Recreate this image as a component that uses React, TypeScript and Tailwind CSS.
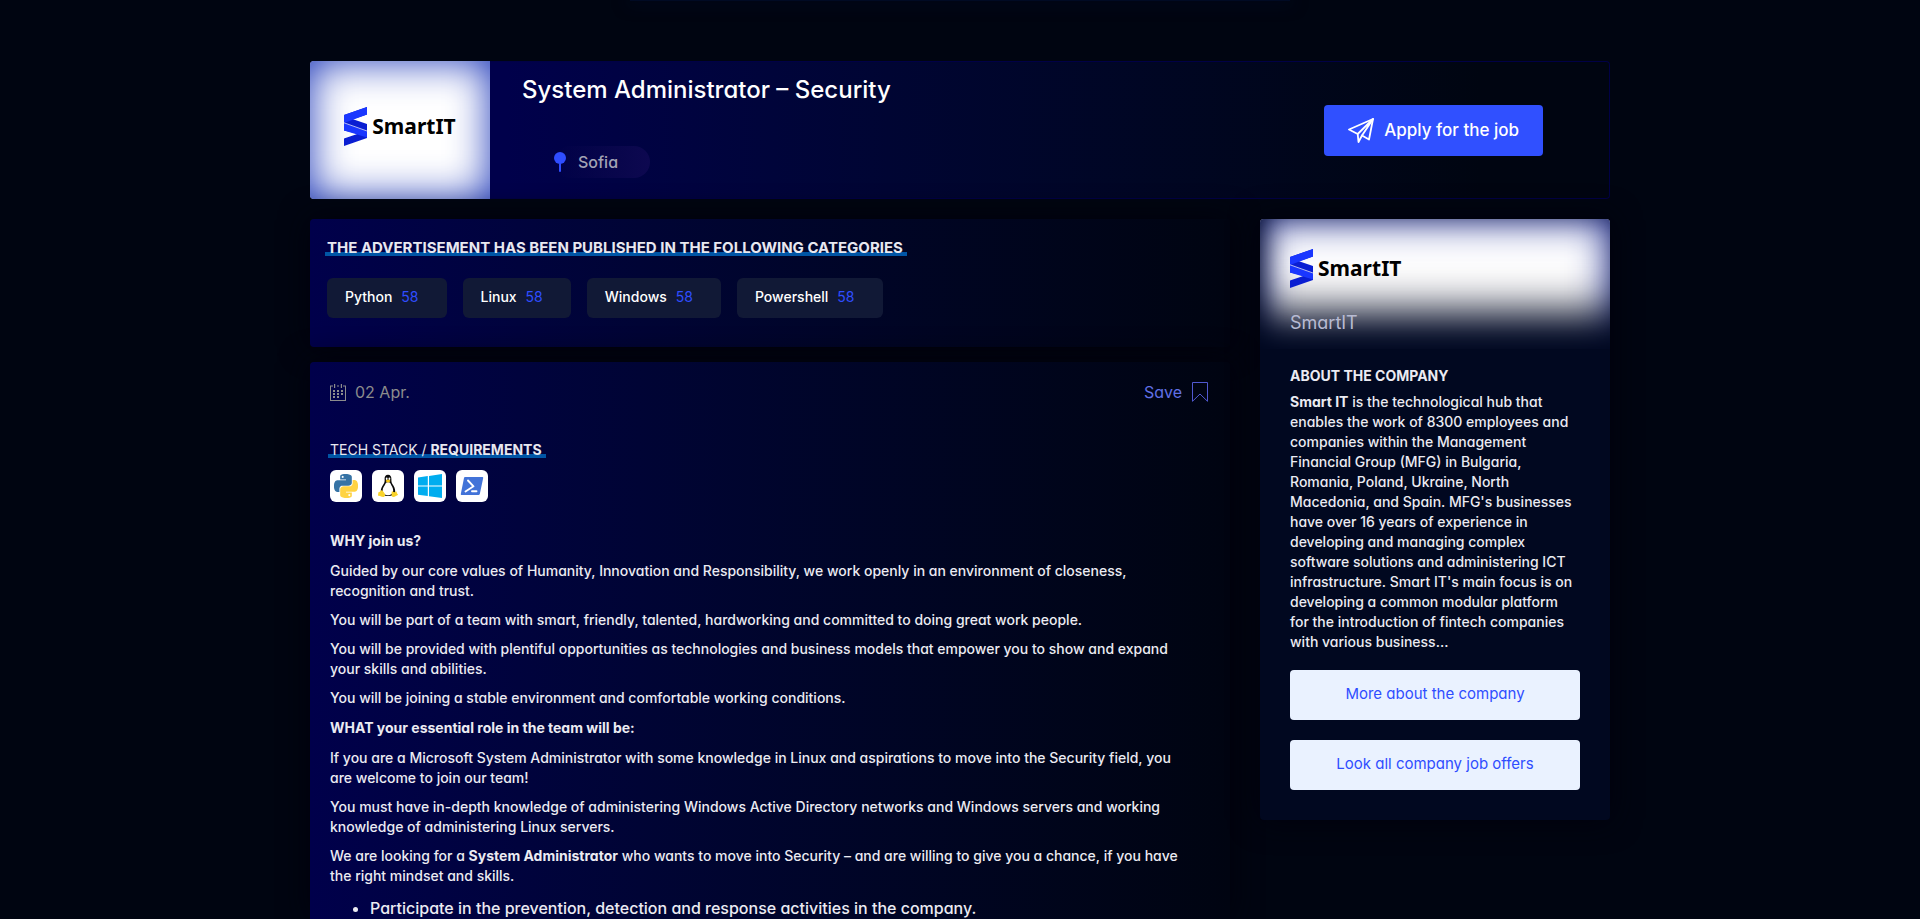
import type { ReactNode } from "react";

const categories = [
  { name: "Python", count: 58 },
  { name: "Linux", count: 58 },
  { name: "Windows", count: 58 },
  { name: "Powershell", count: 58 },
];

function SmartLogo() {
  return (
    <div className="flex items-center gap-[5px]">
      <svg width="23" height="39" viewBox="0 0 23 39" aria-hidden="true">
        <path d="M0 8L23 0V7.500L9 12.300L23 17V31L0 39V31.500L14 26.800L0 23.500Z" fill="#0a1ed2" />
        <path d="M0 8L23 0V7.500L0 16Z" fill="#1a37ff" />
        <path d="M0 16L23 24.500V30.500L0 23.500Z" fill="#1a37ff" />
        <path d="M0 15.800L23 24" stroke="#fff" strokeWidth="0.7" />
      </svg>
      <span className="font-['Noto_Sans'] text-[21px] leading-[39px] font-bold text-black">SmartIT</span>
    </div>
  );
}

function Plane() {
  return (
    <svg width="26" height="25" viewBox="0 0 26 25" fill="none" stroke="#fff" strokeWidth="1.8" strokeLinejoin="round" aria-hidden="true">
      <path d="M1 11.500L25 1L21 21.500L14 17.500L10.500 24L9.700 16Z" />
      <path d="M9.700 16L25 1L14 17.500" />
    </svg>
  );
}

function Pin() {
  return (
    <svg width="12" height="20" viewBox="0 0 12 20" aria-hidden="true">
      <circle cx="6" cy="6" r="6" fill="#2f4dff" />
      <rect x="5" y="11" width="2" height="9" rx="1" fill="#2f4dff" />
    </svg>
  );
}

function Calendar() {
  const dots = [[7, 6], [11, 6], [3, 6], [3, 9], [7, 9], [11, 9], [3, 12], [7, 12]];
  return (
    <svg width="16" height="17" viewBox="0 0 16 17" fill="#8c8c8c" aria-hidden="true">
      <path d="M0 1.500H3V2.500H1V16H15V2.500H13V1.500H16V17H0Z" />
      <path d="M4 0H5.200V4H4ZM10.800 0H12V4H10.800ZM7 1.500H9V2.500H7Z" />
      {dots.map(([x, y]) => (
        <rect key={`${x}-${y}`} x={x} y={y} width="2" height="2" />
      ))}
    </svg>
  );
}

function PythonIcon() {
  return (
    <svg width="24" height="24" viewBox="0 0 24 24" aria-hidden="true">
      <path fill="#3673a5" d="M14.25.18l.9.2.73.26.59.3.45.32.34.34.25.34.16.33.1.3.04.26.02.2-.01.13V8.5l-.05.63-.13.55-.21.46-.26.38-.3.31-.33.25-.35.19-.35.14-.33.1-.3.07-.26.04-.21.02H8.77l-.69.05-.59.14-.5.22-.41.27-.33.32-.27.35-.2.36-.15.37-.1.35-.07.32-.04.27-.02.21v3.06H3.17l-.21-.03-.28-.07-.32-.12-.35-.18-.36-.26-.36-.36-.35-.46-.32-.59-.28-.73-.21-.88-.14-1.05-.05-1.23.06-1.22.16-1.04.24-.87.32-.71.36-.57.4-.44.42-.33.42-.24.4-.16.36-.1.32-.05.24-.01h.16l.06.01h8.16v-.83H6.18l-.01-2.75-.02-.37.05-.34.11-.31.17-.28.25-.26.31-.23.38-.2.44-.18.51-.15.58-.12.64-.1.71-.06.77-.04.84-.02 1.27.05zm-6.3 1.98l-.23.33-.08.41.08.41.23.34.33.22.41.09.41-.09.33-.22.23-.34.08-.41-.08-.41-.23-.33-.33-.22-.41-.09-.41.09z" />
      <path fill="#ffd342" d="M21.04 6.11l.28.06.32.12.35.18.36.27.36.35.35.47.32.59.28.73.21.88.14 1.04.05 1.23-.06 1.23-.16 1.04-.24.86-.32.71-.36.57-.4.45-.42.33-.42.24-.4.16-.36.09-.32.05-.24.02-.16-.01h-8.22v.82h5.84l.01 2.76.02.36-.05.34-.11.31-.17.29-.25.25-.31.24-.38.2-.44.17-.51.15-.58.13-.64.09-.71.07-.77.04-.84.01-1.27-.04-1.07-.14-.9-.2-.73-.25-.59-.3-.45-.33-.34-.34-.25-.34-.16-.33-.1-.3-.04-.25-.02-.2.01-.13v-5.34l.05-.64.13-.54.21-.46.26-.38.3-.32.33-.24.35-.2.35-.14.33-.1.3-.06.26-.04.21-.02.13-.01h5.84l.69-.05.59-.14.5-.21.41-.28.33-.32.27-.35.2-.36.15-.36.1-.35.07-.32.04-.28.02-.21V6.07h2.09l.14.01zm-6.47 14.25l-.23.33-.08.41.08.41.23.33.33.23.41.08.41-.08.33-.23.23-.33.08-.41-.08-.41-.23-.33-.33-.23-.41-.08-.41.08z" />
    </svg>
  );
}

function TuxIcon() {
  return (
    <svg width="24" height="24" viewBox="0 0 24 24" aria-hidden="true">
      <path fill="#0b0b0b" d="M12 .8c-2.400 0-3.500 1.700-3.400 4 .1 2.200.2 3.300-1 5.200-1.500 2.200-2.900 4.600-2.800 7.200.1 3 3.200 4.800 7.200 4.800s7-1.700 7.200-4.600c.1-2.800-1.200-5-2.800-7.400-1.100-1.700-1-3-1-5C15.400 2.500 14.400.8 12 .8z" />
      <path fill="#fff" d="M12 8.300c-1.200 0-2 .1-2.500 1.400-.8 2.100-2.900 4-2.900 6.700 0 2.900 2.600 4.900 5.400 4.900s5.200-2 5.200-4.800c0-2.600-1.800-4.600-2.700-6.900-.4-1.100-1.200-1.300-2.500-1.300z" />
      <ellipse cx="10.700" cy="4.700" rx=".9" ry="1.200" fill="#fff" />
      <ellipse cx="13.400" cy="4.700" rx=".9" ry="1.200" fill="#fff" />
      <path fill="#f5c518" d="M9.700 6.800c.8-.8 1.600-1.200 2.400-1.200s1.700.4 2.300 1.100c-.4 1.100-1.200 1.900-2.400 1.900s-1.900-.8-2.300-1.800z" />
      <path fill="#f9d32a" d="M5.600 16.200c1.200 0 1.700 1.500 2.700 2.900.9 1.300 1.500 3.500-.7 3.800-1.800.2-3-.8-4.800-1.100-1-.2-.9-1-.6-1.900.2-.9-.2-1.700.9-1.900 1.300-.2 1.300-1.800 2.500-1.800z" />
      <path fill="#f9d32a" d="M16.300 17.300c.8 0 1 1 2 .9 1 0 1.500-1.100 2-.6.8.8.3 1.600 1.200 2.300.7.500.6 1-.1 1.400-1.500.7-2.400 1.700-3.800 1.700-2 0-2.300-1.400-2-3 .2-1.200-.2-2.700.7-2.700z" />
    </svg>
  );
}

function WindowsIcon() {
  return (
    <svg width="24" height="24" viewBox="0 0 24 24" fill="#00adef" aria-hidden="true">
      <path d="M0 3.400L9.800 2.100V11.500H0ZM11 1.900L24 0V11.500H11ZM0 12.600H9.800V22L0 20.700ZM11 12.600H24V24L11 22.200Z" />
    </svg>
  );
}

function PowershellIcon() {
  return (
    <svg width="24" height="24" viewBox="0 0 24 24" aria-hidden="true">
      <path d="M5 3H22.400Q23.400 3 23.200 4L19.800 20Q19.500 21 18.500 21H1.500Q.6 21 .8 20L4 4Q4.200 3 5 3Z" fill="#4273d8" />
      <path d="M8 6.500L13.500 12.300L5.500 17.500M12 17.200H16.500" fill="none" stroke="#fff" strokeWidth="1.900" strokeLinecap="round" strokeLinejoin="round" />
    </svg>
  );
}

function Underlined({ children }: { children: ReactNode }) {
  return (
    <h2 className="-ml-0.5 w-fit bg-[linear-gradient(#0055a5,#0055a5)] bg-[length:100%_4px] bg-[position:0_14px] bg-no-repeat pr-1 pl-0.5 leading-5 text-[#e8e8f0]">
      {children}
    </h2>
  );
}

const panel = "rounded-sm bg-linear-to-r from-[#00004b] to-[#000411] shadow-[0_0_30px_#00010c]";

export default function App() {
  return (
    <div className="flex min-h-screen flex-col bg-[#000511] font-['Inter',sans-serif] text-sm leading-5 font-medium text-[#ebebf2] [font-feature-settings:'cv11']">
      <div className="mx-auto h-px w-[660px] max-w-full shrink-0 bg-[#000a24] shadow-[0_0_16px_2px_#000a24]" />
      <main className="mx-auto mt-15 flex w-full max-w-[1300px] flex-1 flex-col gap-5">
        <header className="flex min-h-[138px] overflow-hidden rounded-sm bg-linear-to-r from-[#00004b] from-15% to-[#000511] to-90% inset-ring inset-ring-[#000046]">
          <div className="flex w-[180px] items-center justify-center bg-white shadow-[inset_0_0_40px_#1a35b8]">
            <div className="-mt-2">
              <SmartLogo />
            </div>
          </div>
          <div className="flex flex-1 flex-col items-start justify-between py-[13px] pb-[21px] pl-8">
            <h1 className="text-2xl leading-8 text-white">System Administrator – Security</h1>
            <p className="ml-8 flex h-8 items-center gap-3 rounded-full bg-linear-to-r from-transparent to-[#0d0850] pr-8 text-base text-[#a3a3b5]">
              <Pin />
              Sofia
            </p>
          </div>
          <div className="flex items-center pr-[67px]">
            <button type="button" className="flex h-[51px] items-center gap-2.5 rounded-sm bg-[#3050ff] px-6 text-[17px] font-medium text-white">
              <Plane />
              Apply for the job
            </button>
          </div>
        </header>

        <div className="flex flex-1 items-stretch gap-[30px]">
          <div className="flex min-w-0 flex-1 flex-col gap-[15px]">
            <section className={`${panel} min-h-32 px-[17px] pt-[19px] text-[15px]`}>
              <Underlined>
                <b>THE ADVERTISEMENT HAS BEEN PUBLISHED IN THE FOLLOWING CATEGORIES</b>
              </Underlined>
              <ul className="mt-5 flex flex-wrap gap-4 text-sm">
                {categories.map((c) => (
                  <li key={c.name}>
                    <a href="#" className="flex h-10 items-center gap-[9px] rounded-md bg-[#111936] pr-7 pb-0.5 pl-[18px] text-white">
                      {c.name}
                      <span className="font-normal text-[#2f4dff]">{c.count}</span>
                    </a>
                  </li>
                ))}
              </ul>
            </section>

            <article className={`${panel} flex-1 rounded-b-none px-5 pt-5`}>
              <div className="flex items-center justify-between pr-0.5 text-base leading-5 font-normal">
                <p className="flex items-center gap-[9px] text-[#8c8c8c]">
                  <Calendar />
                  02 Apr.
                </p>
                <button type="button" className="flex items-center gap-2.5 text-[#6070e6]">
                  Save
                  <svg width="16" height="20" viewBox="0 0 16 20" fill="none" stroke="#5058d0" aria-hidden="true">
                    <path d="M.5.5H15.500V19.300L8 12L.5 19.300Z" />
                  </svg>
                </button>
              </div>
              <div className="mt-[38px]">
                <Underlined>
                  <span className="font-normal">TECH STACK /</span> <b>REQUIREMENTS</b>
                </Underlined>
              </div>
              <ul className="mt-2.5 flex gap-2.5">
                {[<PythonIcon />, <TuxIcon />, <WindowsIcon />, <PowershellIcon />].map((icon, i) => (
                  <li key={i} className="flex size-8 items-center justify-center rounded-md bg-white">
                    {icon}
                  </li>
                ))}
              </ul>
              <h3 className="mt-[29px] mb-2.5 font-bold">WHY join us?</h3>
              <div className="flex flex-col gap-[9px] pr-5">
                <p>Guided by our core values of Humanity, Innovation and Responsibility, we work openly in an environment of closeness, recognition and trust.</p>
                <p>You will be part of a team with smart, friendly, talented, hardworking and committed to doing great work people.</p>
                <p>You will be provided with plentiful opportunities as technologies and business models that empower you to show and expand your skills and abilities.</p>
                <p>You will be joining a stable environment and comfortable working conditions.</p>
              </div>
              <h3 className="mt-2.5 mb-2.5 font-bold">WHAT your essential role in the team will be:</h3>
              <div className="flex flex-col gap-[9px] pr-5">
                <p>If you are a Microsoft System Administrator with some knowledge in Linux and aspirations to move into the Security field, you are welcome to join our team!</p>
                <p>You must have in-depth knowledge of administering Windows Active Directory networks and Windows servers and working knowledge of administering Linux servers.</p>
                <p>We are looking for a <b>System Administrator</b> who wants to move into Security – and are willing to give you a chance, if you have the right mindset and skills.</p>
              </div>
              <ul className="mt-3 list-disc pl-10 text-base leading-5">
                <li>Participate in the prevention, detection and response activities in the company.</li>
              </ul>
            </article>
          </div>

          <aside className="flex w-[350px] shrink-0 flex-col self-start overflow-hidden rounded-sm bg-[#010820] pb-[30px] shadow-[0_0_30px_#00010c]">
            <div className="h-[130px] bg-white px-[30px] pt-[30px] shadow-[inset_0_-62px_44px_-24px_#010820,inset_12px_0_30px_-12px_#010820,inset_0_0_42px_#1a2a96]">
              <SmartLogo />
              <p className="mt-[23px] text-lg leading-6 font-normal text-[#b8bbd2]">SmartIT</p>
            </div>
            <div className="px-[30px] pt-[17px]">
              <h2 className="font-bold">ABOUT THE COMPANY</h2>
              <p className="mt-1.5">
                <b>Smart IT</b> is the technological hub that enables the work of 8300 employees and companies within the Management Financial Group (MFG) in Bulgaria, Romania, Poland, Ukraine, North Macedonia, and Spain. MFG's businesses have over 16 years of experience in developing and managing complex software solutions and administering ICT infrastructure. Smart IT's main focus is on developing a common modular platform for the introduction of fintech companies with various business...
              </p>
              <div className="mt-[18px] flex flex-col gap-5 text-[15px]">
                <a href="#" className="flex h-[50px] items-center justify-center rounded-sm bg-[#eaf2ff] pb-0.5 font-normal text-[#2f4dff]">More about the company</a>
                <a href="#" className="flex h-[50px] items-center justify-center rounded-sm bg-[#eaf2ff] pb-0.5 font-normal text-[#2f4dff]">Look all company job offers</a>
              </div>
            </div>
          </aside>
        </div>
      </main>
    </div>
  );
}
